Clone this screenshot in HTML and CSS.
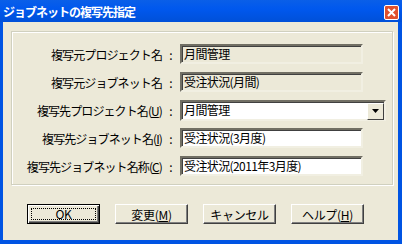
FILE: index.html
```html
<!DOCTYPE html>
<html lang="ja">
<head>
  <meta charset="UTF-8">
  <title>ジョブネットの複写先指定</title>
  <link rel="stylesheet" href="styles.css">
</head>
<body>

  <div class="window">
    <div class="titlebar">
      <span class="title">ジョブネットの複写先指定</span>
      <span class="close">
        <svg width="9" height="9" viewBox="0 0 9 9">
          <path d="M1 1 L8 8 M8 1 L1 8" stroke="#fff" stroke-width="2"/>
        </svg>
      </span>
    </div>

    <div class="client">
      <div class="group">
        <div class="row">
          <div class="label">複写元プロジェクト名</div>
          <div class="colon">:</div>
          <div class="field readonly">月間管理</div>
        </div>
        <div class="row">
          <div class="label">複写元ジョブネット名</div>
          <div class="colon">:</div>
          <div class="field readonly">受注状況(月間)</div>
        </div>
        <div class="row">
          <div class="label">複写先プロジェクト名(<u>U</u>)</div>
          <div class="colon">:</div>
          <div class="field combo">
            <span class="combo-text">月間管理</span>
            <span class="combo-btn">
              <svg width="7" height="4" viewBox="0 0 7 4"><path d="M0 0 H7 L3.5 4 Z" fill="#000"/></svg>
            </span>
          </div>
        </div>
        <div class="row">
          <div class="label">複写先ジョブネット名(<u>I</u>)</div>
          <div class="colon">:</div>
          <div class="field">受注状況(3月度)</div>
        </div>
        <div class="row">
          <div class="label">複写先ジョブネット名称(<u>C</u>)</div>
          <div class="colon">:</div>
          <div class="field">受注状況(2011年3月度)</div>
        </div>
      </div>

      <div class="buttons">
        <button class="default"><span class="focus">OK</span></button>
        <button>変更(<u>M</u>)</button>
        <button>キャンセル</button>
        <button>ヘルプ(<u>H</u>)</button>
      </div>
    </div>
  </div>

</body>
</html>
```

FILE: styles.css
```css
body {
  margin: 0;
  font-family: "Noto Sans CJK JP", "DejaVu Sans", sans-serif;
  font-size: 12px;
  color: #000;
}
.window {
  width: 402px;
  height: 244px;
  box-sizing: border-box;
  background: #0054e3;
  padding: 0 4px 4px 3px;
  display: flex;
  flex-direction: column;
}
.titlebar {
  height: 22px;
  display: flex;
  align-items: center;
  justify-content: space-between;
  background: linear-gradient(#0a5fe8, #0058ee 40%, #0050d8);
  margin: 0 -4px 0 -3px;
  padding: 0 3px 0 3px;
}
.title {
  color: #fff;
  font-weight: bold;
  font-size: 12px;
  letter-spacing: -1px;
  margin-top: 1px;
}
.close {
  width: 13px;
  height: 13px;
  border: 1px solid #fff;
  border-radius: 2px;
  background: #e0502e;
  display: flex;
  align-items: center;
  justify-content: center;
  margin-top: 2px;
}
.client {
  flex: 1;
  background: #ece9d8;
  padding: 9px 5px 0 8px;
}
.group {
  height: 154px;
  box-sizing: border-box;
  border: 1px solid #d0d0bf;
  box-shadow: inset 1px 1px 0 #fff, 1px 1px 0 #fff;
  padding: 12px 0 0 2px;
  display: flex;
  flex-direction: column;
  gap: 8px;
}
.row {
  display: flex;
  align-items: center;
  height: 20px;
}
.label {
  width: 148px;
  text-align: right;
  white-space: nowrap;
  letter-spacing: -0.9px;
}
.colon {
  width: 18px;
  text-align: center;
}
.field {
  width: 183px;
  height: 20px;
  box-sizing: border-box;
  background: #fff;
  border: 2px solid;
  border-color: #716f64 #f1efe2 #f1efe2 #716f64;
  box-shadow: inset 1px 1px 0 #404040;
  padding: 0 2px;
  line-height: 16px;
  white-space: nowrap;
  letter-spacing: -0.6px;
}
.readonly {
  background: #ece9d8;
}
.combo {
  width: 206px;
  height: 21px;
  display: flex;
  justify-content: space-between;
  padding-right: 0;
}
.combo-btn {
  width: 15px;
  height: 15px;
  margin-top: 1px;
  background: #ece9d8;
  border: 1px solid;
  border-color: #fff #404040 #404040 #fff;
  display: flex;
  align-items: center;
  justify-content: center;
}
.buttons {
  display: flex;
  gap: 15px;
  padding: 19px 0 0 16px;
}
button {
  width: 73px;
  height: 20px;
  font-family: inherit;
  font-size: 12px;
  letter-spacing: -0.3px;
  background: #ece9d8;
  border: 1px solid;
  border-color: #fff #404040 #404040 #fff;
  box-shadow: inset -1px -1px 0 #808080;
  padding: 0;
  color: #000;
}
button.default {
  border: 1px solid #000;
  box-shadow: inset 1px 1px 0 #fff, inset -1px -1px 0 #404040, inset -2px -2px 0 #808080;
  padding: 3px;
}
.focus {
  display: block;
  height: 100%;
  box-sizing: border-box;
  border: 1px dotted #000;
  line-height: 10px;
}
```
